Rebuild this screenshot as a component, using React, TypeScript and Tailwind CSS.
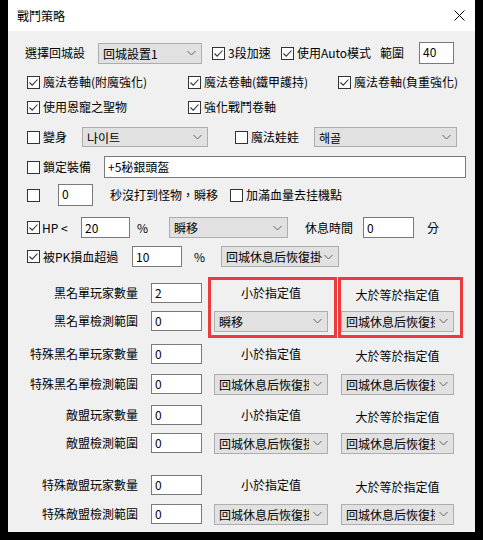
import React from "react";

const FONT = { fontFamily: '"Noto Sans CJK TC", "Noto Sans", sans-serif' };

function Check({ checked }: { checked?: boolean }) {
  return (
    <div className="w-[13px] h-[13px] shrink-0 border border-[#333333] bg-white flex items-center justify-center">
      {checked && (
        <svg width="11" height="11" viewBox="0 0 11 11">
          <path d="M1.5 5.5 L4.2 8.2 L9.5 2.5" fill="none" stroke="#333333" strokeWidth="1.1" />
        </svg>
      )}
    </div>
  );
}

function CheckLabel({ checked, label, w, gap = 3 }: { checked?: boolean; label: string; w: number; gap?: number }) {
  return (
    <div className="flex items-center shrink-0" style={{ width: w }}>
      <Check checked={checked} />
      <span className="whitespace-nowrap leading-none" style={{ marginLeft: gap }}>
        {label}
      </span>
    </div>
  );
}

function Select({ text, w, h = 20, clip = 20 }: { text: string; w: number; h?: number; clip?: number }) {
  return (
    <div
      className="shrink-0 border border-[#adadad] bg-[#e1e1e1] flex items-center relative"
      style={{ width: w, height: h }}
    >
      <div className="overflow-hidden whitespace-nowrap leading-[17px] pl-[4px]" style={{ width: w - clip }}>
        {text}
      </div>
      <svg className="absolute right-[5px] top-1/2 -translate-y-1/2" width="9" height="5" viewBox="0 0 9 5">
        <path d="M0.5 0.5 L4.5 4.5 L8.5 0.5" fill="none" stroke="#606060" strokeWidth="1" />
      </svg>
    </div>
  );
}

function Input({ text, w, h = 20 }: { text: string; w: number; h?: number }) {
  return (
    <div
      className="shrink-0 border border-[#7a7a7a] bg-white flex items-center pl-[3px] leading-none"
      style={{ width: w, height: h }}
    >
      {text}
    </div>
  );
}

function GridRow({
  label,
  value,
  c3,
  c4,
  mt,
}: {
  label: string;
  value: string;
  c3: React.ReactNode;
  c4: React.ReactNode;
  mt: number;
}) {
  return (
    <div className="flex items-center h-[20px]" style={{ marginTop: mt }}>
      <div className="w-[130px] text-right whitespace-nowrap leading-none">{label}</div>
      <div className="ml-[13px]">
        <Input text={value} w={51} />
      </div>
      <div className="ml-[12px] w-[114px] flex justify-center">{c3}</div>
      <div className="ml-[13px] w-[113px] flex justify-center">{c4}</div>
    </div>
  );
}

const LT = <span className="leading-none whitespace-nowrap">小於指定值</span>;
const GE = <span className="leading-none whitespace-nowrap relative top-[2px]">大於等於指定值</span>;
const SEL = "回城休息后恢復掛";

export default function App() {
  return (
    <div className="w-[483px] h-[540px] bg-black pl-[8px] text-[12px] text-black" style={FONT}>
      <div className="w-[467px] h-[532px] flex flex-col">
        <div className="h-[31px] bg-white flex items-center justify-between pl-[9px] pr-[10px] shrink-0">
          <span className="leading-none">戰鬥策略</span>
          <svg width="11" height="11" viewBox="0 0 11 11">
            <path d="M0.5 0.5 L10.5 10.5 M10.5 0.5 L0.5 10.5" stroke="#000" strokeWidth="1" />
          </svg>
        </div>
        <div className="flex-1 bg-[#f0f0f0] flex flex-col">
          {/* Row 1 */}
          <div className="flex items-center h-[22px] mt-[11px] pl-[17px]">
            <div className="w-[73px] whitespace-nowrap leading-none">選擇回城設</div>
            <Select text="回城設置1" w={104} h={21} />
            <div className="ml-[10px]">
              <CheckLabel checked label="3段加速" w={69} />
            </div>
            <CheckLabel checked label="使用Auto模式" w={99} />
            <div className="w-[39px] leading-none whitespace-nowrap">範圍</div>
            <div className="border border-[#7a7a7a] bg-white w-[35px] h-[22px] pl-[3px] pt-[3px] leading-none">40</div>
          </div>
          {/* Row 2 */}
          <div className="flex items-center h-[20px] mt-[8px] pl-[19px]">
            <CheckLabel checked label="魔法卷軸(附魔強化)" w={161} />
            <CheckLabel checked label="魔法卷軸(鐵甲護持)" w={150} />
            <CheckLabel checked label="魔法卷軸(負重強化)" w={120} />
          </div>
          {/* Row 3 */}
          <div className="flex items-center h-[20px] mt-[5px] pl-[19px]">
            <CheckLabel checked label="使用恩寵之聖物" w={161} />
            <CheckLabel checked label="強化戰鬥卷軸" w={120} />
          </div>
          {/* Row 4 */}
          <div className="flex items-center h-[20px] mt-[10px] pl-[19px]">
            <CheckLabel label="變身" w={55} />
            <Select text="나이트" w={126} />
            <div className="ml-[27px]">
              <CheckLabel label="魔法娃娃" w={79} />
            </div>
            <Select text="해골" w={143} />
          </div>
          {/* Row 5 */}
          <div className="flex items-center h-[22px] mt-[9px] pl-[19px]">
            <CheckLabel label="鎖定裝備" w={77} />
            <Input text="+5秘銀頭盔" w={362} h={22} />
          </div>
          {/* Row 6 */}
          <div className="flex items-center h-[22px] mt-[6px] pl-[19px]">
            <div className="w-[31px]">
              <Check />
            </div>
            <div className="border border-[#7a7a7a] bg-white w-[35px] h-[22px] pl-[3px] pt-[3px] leading-none shrink-0">0</div>
            <div className="ml-[17px] w-[120px] whitespace-nowrap leading-none">秒沒打到怪物，瞬移</div>
            <CheckLabel label="加滿血量去挂機點" w={120} />
          </div>
          {/* Row 7 */}
          <div className="flex items-center h-[21px] mt-[11px] pl-[19px]">
            <CheckLabel checked label="HP <" w={54} gap={2} />
            <Input text="20" w={49} h={21} />
            <div className="ml-[7px] w-[32px] leading-none">%</div>
            <Select text="瞬移" w={119} h={21} />
            <div className="ml-[17px] w-[58px] whitespace-nowrap leading-none">休息時間</div>
            <Input text="0" w={51} h={21} />
            <div className="ml-[13px] leading-none">分</div>
          </div>
          {/* Row 8 */}
          <div className="flex items-center h-[21px] mt-[8px] pl-[19px]">
            <CheckLabel checked label="被PK損血超過" w={105} />
            <Input text="10" w={50} h={21} />
            <div className="ml-[12px] w-[27px] leading-none">%</div>
            <Select text={SEL} w={118} h={21} clip={14} />
          </div>

          {/* Grid with annotations */}
          <div className="relative">
            <GridRow label="黑名單玩家數量" value="2" c3={LT} c4={GE} mt={16} />
            <GridRow label="黑名單檢測範圍" value="0" c3={<Select text="瞬移" w={114} h={21} />} c4={<Select text={SEL} w={113} h={21} />} mt={8} />
            <div className="absolute left-[200px] top-[10px] w-[129px] h-[61px] border-[3px] border-[#ee3a3a]" />
            <div className="absolute left-[330px] top-[10px] w-[125px] h-[61px] border-[3px] border-[#ee3a3a]" />
          </div>
          <GridRow label="特殊黑名單玩家數量" value="0" c3={LT} c4={GE} mt={13} />
          <GridRow label="特殊黑名單檢測範圍" value="0" c3={<Select text={SEL} w={114} h={21} />} c4={<Select text={SEL} w={113} h={21} />} mt={10} />
          <GridRow label="敵盟玩家數量" value="0" c3={LT} c4={GE} mt={11} />
          <GridRow label="敵盟檢測範圍" value="0" c3={<Select text={SEL} w={114} h={21} />} c4={<Select text={SEL} w={113} h={21} />} mt={8} />
          <GridRow label="特殊敵盟玩家數量" value="0" c3={LT} c4={GE} mt={22} />
          <GridRow label="特殊敵盟檢測範圍" value="0" c3={<Select text={SEL} w={114} h={21} />} c4={<Select text={SEL} w={113} h={21} />} mt={9} />
        </div>
      </div>
    </div>
  );
}
